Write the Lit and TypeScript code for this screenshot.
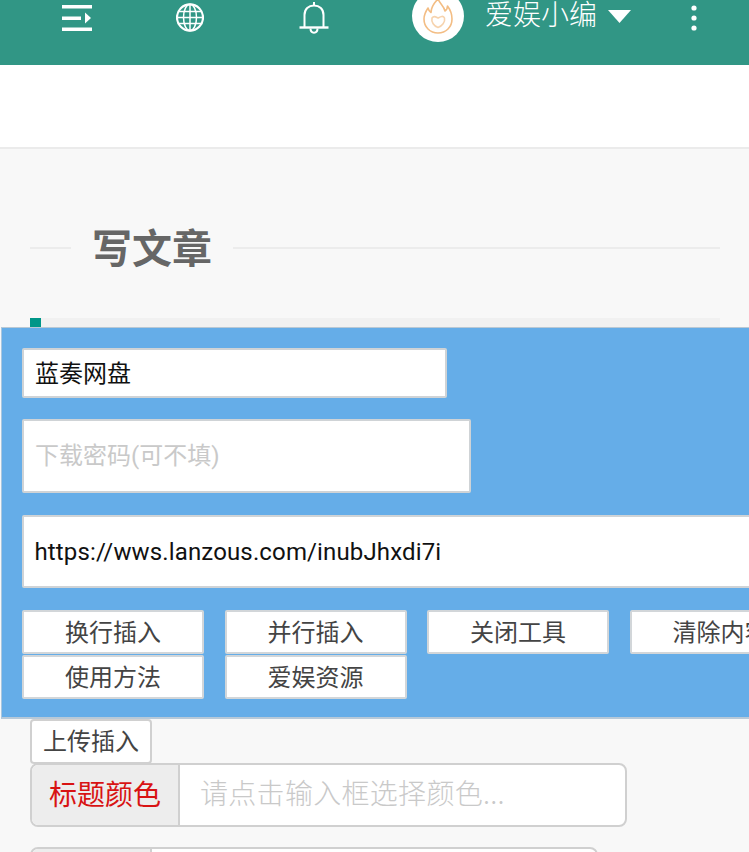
import { LitElement, html, css } from "lit";
import { customElement } from "lit/decorators.js";

@customElement("app-root")
export class AppRoot extends LitElement {
  static styles = css`
    :host {
      display: block;
      width: 749px;
      height: 852px;
      overflow: hidden;
      background: #f8f8f8;
      font-family: "Roboto", "Noto Sans CJK SC", sans-serif;
      color: #555;
    }
    * { box-sizing: border-box; }
    .bar {
      height: 65px;
      background: #319685;
      display: flex;
      align-items: flex-start;
      color: #fff;
      padding-left: 62px;
    }
    .bar svg { display: block; flex: none; }
    .menu { margin-top: 5px; }
    .globe { margin: 3px 0 0 84px; }
    .bell { margin: 1px 0 0 95px; }
    .avatar {
      width: 52px;
      height: 52px;
      margin: -10px 0 0 82.500px;
      border-radius: 50%;
      background: #fff;
      display: flex;
      align-items: center;
      justify-content: center;
      flex: none;
    }
    .name {
      margin-left: 21.500px;
      font-size: 28px;
      line-height: 28px;
      margin-top: -1px;
      white-space: nowrap;
      font-family: "Noto Sans CJK SC", sans-serif;
      font-weight: 300;
    }
    .caret { margin: 10px 0 0 11px; }
    .dots { margin: 5px 0 0 60px; }
    .sub {
      height: 84px;
      background: #fff;
      border-bottom: 2px solid #ebebeb;
    }
    .title {
      height: 169px;
      padding: 0 29px 0 30px;
      display: flex;
      align-items: flex-start;
    }
    .title i {
      display: block;
      height: 2px;
      background: #ececec;
      margin-top: 98px;
    }
    .title i.a { width: 41px; }
    .title i.b { flex: 1; }
    .title h1 {
      margin: 70px 21px 0 21px;
      font-size: 40px;
      line-height: 54px;
      font-weight: 700;
      color: #666;
      font-family: "Noto Sans CJK SC", sans-serif;
    }
    .progress {
      margin: 0 29px 0 30px;
      height: 9px;
      background: #f1f1f1;
    }
    .progress b {
      display: block;
      width: 11px;
      height: 9px;
      background: #009688;
    }
    .panel {
      height: 392px;
      margin-left: 1px;
      background: #65ade8;
      border-top: 1px solid #b9c8d4;
      border-left: 1px solid #a9c6de;
      border-bottom: 2px solid #b7c9d8;
      padding: 20px 0 0 20px;
      overflow: hidden;
    }
    input {
      display: block;
      border: 2px solid #cfd3d6;
      background: #fff;
      font: inherit;
      font-size: 24px;
      color: #111;
      padding: 0 11px;
      outline: none;
      border-radius: 2px;
    }
    input::placeholder { color: #c9c9c9; opacity: 1; }
    .f1 { width: 425px; height: 50px; padding-bottom: 4px; font-family: "Noto Sans CJK SC", sans-serif; }
    .f2 { width: 449px; height: 74px; margin-top: 21px; }
    .f3 { width: 800px; height: 73px; margin-top: 22px; padding-left: 10.500px; letter-spacing: 0.14px; }
    .btns {
      display: grid;
      grid-template-columns: repeat(4, 182px);
      grid-auto-rows: 44px;
      column-gap: 20.500px;
      row-gap: 1px;
      width: 830px;
      margin-top: 22px;
    }
    .btn {
      display: flex;
      align-items: center;
      justify-content: center;
      background: #fff;
      border: 2px solid #d2d6d9;
      border-radius: 2px;
      padding-bottom: 4px;
      font-size: 24px;
      color: #444;
      font-family: "Noto Sans CJK SC", sans-serif;
      font-weight: 400;
      white-space: nowrap;
    }
    .upload {
      width: 122px;
      height: 45px;
      margin-left: 30px;
      border-radius: 4px;
      background: #fff;
      border-color: #d0d0d0;
    }
    .group {
      display: flex;
      margin-left: 30px;
      margin-top: -1px;
      border: 2px solid #d0d0d0;
      border-radius: 8px;
      background: #fff;
      overflow: hidden;
      font-family: "Noto Sans CJK SC", sans-serif;
    }
    .group.one { width: 597px; height: 64px; }
    .group.two { width: 568px; height: 64px; margin-top: 20px; }
    .group span {
      flex: none;
      display: flex;
      align-items: center;
      justify-content: center;
      background: #ededed;
      border-right: 2px solid #d0d0d0;
      padding-bottom: 5px;
      font-size: 28px;
      font-weight: 400;
      color: #d81313;
    }
    .group.one span { width: 148px; }
    .group.two span { width: 120px; }
    .group input {
      flex: 1;
      min-width: 0;
      border: 0;
      height: 100%;
      font-size: 28px;
      font-weight: 300;
      letter-spacing: 0.3px;
      padding: 0 20px 6px;
      background: transparent;
    }
  `;

  render() {
    return html`
      <header class="bar">
        <svg class="menu" width="30" height="26" viewBox="0 0 30 26" fill="#fff">
          <rect x="0" y="0" width="30" height="3.500" />
          <rect x="0" y="11.500" width="19" height="3.500" />
          <path d="M23 7.500 L29 13 L23 18.500 Z" />
          <rect x="0" y="22.500" width="30" height="3.500" />
        </svg>
        <svg class="globe" width="28" height="29" viewBox="0 0 28 29" fill="none" stroke="#fff" stroke-width="2">
          <ellipse cx="14" cy="14.500" rx="13" ry="13.200" stroke-width="2.200" />
          <ellipse cx="14" cy="14.500" rx="6.500" ry="13.200" stroke-width="1.500" />
          <path d="M14 1.300V27.700M2.600 8.500H25.400M1 14.500H27M2.600 20.500H25.400" stroke-width="1.500" />
        </svg>
        <svg class="bell" width="30" height="33" viewBox="0 0 30 33" fill="none" stroke="#fff" stroke-width="2">
          <path d="M5.500 26V14C5.500 8 9.500 4.500 15 4.500S24.500 8 24.500 14V26" />
          <path d="M15 1V4.500" />
          <path d="M0.500 26.500H29.500" stroke-width="2.400" />
          <path d="M11.500 27.500C11.500 33 18.500 33 18.500 27.500" />
        </svg>
        <div class="avatar">
          <svg width="30" height="36" viewBox="0 0 30 36" fill="none" stroke="#f3bd84" stroke-width="1.600" stroke-linejoin="round">
            <path d="M15 1C17 6 21 8 22 13C23.500 12 24.500 10 24.500 8C27.500 12 29 16.500 29 21C29 29 23 35 15 35C7 35 1 29 1 21C1 16 3 13 5 10C5.500 12 6.500 13.500 8 14.500C8 9 11 5 15 1Z" />
            <path d="M9 20C11 17 13 19 15 20C17 19 20 17 21.500 20C22.500 24 19 28 15 29.500C11 28 8 24 9 20Z" stroke="#f6d3ae" />
          </svg>
        </div>
        <div class="name">爱娱小编</div>
        <svg class="caret" width="23" height="13" viewBox="0 0 23 13" fill="#fff"><path d="M0 0H23L11.500 13Z" /></svg>
        <svg class="dots" width="6" height="26" viewBox="0 0 6 26" fill="#fff">
          <circle cx="3" cy="3" r="2.600" /><circle cx="3" cy="13" r="2.600" /><circle cx="3" cy="23" r="2.600" />
        </svg>
      </header>
      <div class="sub"></div>
      <div class="title">
        <i class="a"></i>
        <h1>写文章</h1>
        <i class="b"></i>
      </div>
      <div class="progress"><b></b></div>
      <section class="panel">
        <input class="f1" .value=${"蓝奏网盘"} />
        <input class="f2" placeholder="下载密码(可不填)" />
        <input class="f3" .value=${"https://wws.lanzous.com/inubJhxdi7i"} />
        <div class="btns">
          <div class="btn">换行插入</div>
          <div class="btn">并行插入</div>
          <div class="btn">关闭工具</div>
          <div class="btn">清除内容</div>
          <div class="btn">使用方法</div>
          <div class="btn">爱娱资源</div>
        </div>
      </section>
      <div class="btn upload">上传插入</div>
      <div class="group one">
        <span>标题颜色</span>
        <input placeholder="请点击输入框选择颜色..." />
      </div>
      <div class="group two">
        <span></span>
        <input />
      </div>
    `;
  }
}
